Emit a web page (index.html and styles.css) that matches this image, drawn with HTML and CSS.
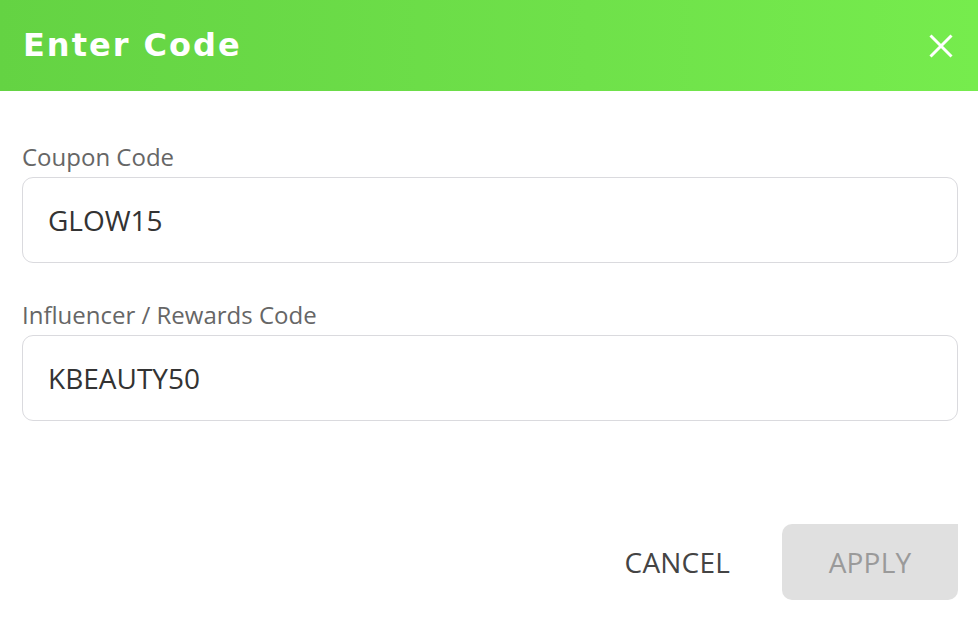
FILE: index.html
```html
<!DOCTYPE html>
<html lang="en">
<head>
<meta charset="utf-8">
<title>Enter Code</title>
<link rel="stylesheet" href="styles.css">
</head>
<body>
<div class="dialog">
  <header class="dialog-header">
    <h1 class="dialog-title">Enter Code</h1>
    <button class="close-btn" aria-label="Close">
      <svg width="24" height="24" viewBox="0 0 24 24"><path d="M1.5 1.5 L22.5 22.5 M22.5 1.5 L1.5 22.5" stroke="#fff" stroke-width="3" stroke-linecap="butt" fill="none"/></svg>
    </button>
  </header>
  <main class="dialog-body">
    <div class="field">
      <label class="field-label">Coupon Code</label>
      <div class="field-input">GLOW15</div>
    </div>
    <div class="field">
      <label class="field-label">Influencer / Rewards Code</label>
      <div class="field-input">KBEAUTY50</div>
    </div>
  </main>
  <footer class="dialog-actions">
    <button class="btn btn-text">CANCEL</button>
    <button class="btn btn-apply" disabled>APPLY</button>
  </footer>
</div>
</body>
</html>
```
FILE: styles.css
```css
html, body {
  margin: 0;
  padding: 0;
  background: #fff;
}
body {
  font-family: "Open Sans", "Noto Sans", sans-serif;
  width: 978px;
  height: 624px;
  overflow: hidden;
}
.dialog {
  display: flex;
  flex-direction: column;
}
.dialog-header {
  height: 91px;
  background: linear-gradient(90deg, #64d343 0%, #6fe14a 60%, #76ec4d 100%);
  display: flex;
  align-items: center;
  justify-content: space-between;
  padding: 0 25px 0 23px;
}
.dialog-title {
  margin: 0;
  color: #fff;
  font-family: "DejaVu Sans", sans-serif;
  font-weight: 700;
  font-size: 32px;
  letter-spacing: 2px;
  line-height: 1;
  padding-bottom: 2px;
}
.close-btn {
  background: none;
  border: none;
  padding: 0;
  width: 24px;
  height: 24px;
  display: flex;
}
.dialog-body {
  padding: 51px 20px 0 22px;
  display: flex;
  flex-direction: column;
  gap: 37px;
}
.field {
  display: flex;
  flex-direction: column;
  gap: 5px;
}
.field-label {
  color: #666;
  font-size: 24px;
  line-height: 30px;
}
.field-input {
  border: 1.5px solid #dadade;
  border-radius: 11px;
  box-sizing: border-box;
  height: 86px;
  padding: 0 25px;
  display: flex;
  align-items: center;
  font-size: 28px;
  color: #333;
}
.dialog-actions {
  display: flex;
  justify-content: flex-end;
  align-items: center;
  gap: 52px;
  padding: 103px 20px 0 0;
}
.btn {
  font-family: "Open Sans", "Noto Sans", sans-serif;
  font-size: 28px;
  border: none;
  letter-spacing: 0.2px;
}
.btn-text {
  background: none;
  color: #444;
  padding: 0;
}
.btn-apply {
  width: 176px;
  height: 76px;
  background: #e0e0e0;
  color: #9a9a9a;
  border-radius: 10px 0 10px 10px;
}
```
